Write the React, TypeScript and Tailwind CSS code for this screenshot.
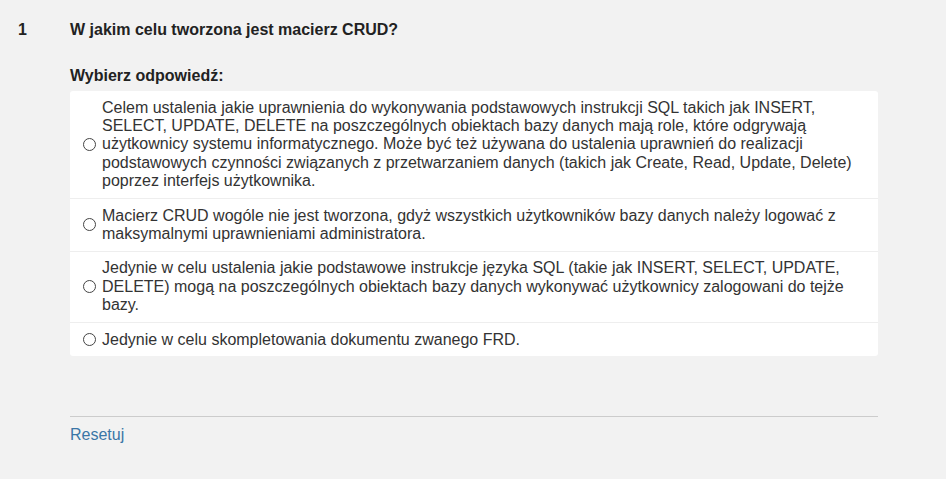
const options = [
  "Celem ustalenia jakie uprawnienia do wykonywania podstawowych instrukcji SQL takich jak INSERT, SELECT, UPDATE, DELETE na poszczególnych obiektach bazy danych mają role, które odgrywają użytkownicy systemu informatycznego. Może być też używana do ustalenia uprawnień do realizacji podstawowych czynności związanych z przetwarzaniem danych (takich jak Create, Read, Update, Delete) poprzez interfejs użytkownika.",
  "Macierz CRUD wogóle nie jest tworzona, gdyż wszystkich użytkowników bazy danych należy logować z maksymalnymi uprawnieniami administratora.",
  "Jedynie w celu ustalenia jakie podstawowe instrukcje języka SQL (takie jak INSERT, SELECT, UPDATE, DELETE) mogą na poszczególnych obiektach bazy danych wykonywać użytkownicy zalogowani do tejże bazy.",
  "Jedynie w celu skompletowania dokumentu zwanego FRD.",
];

export default function App() {
  return (
    <div
      className="min-h-screen w-full bg-[#f2f2f2] text-[16px] text-[#333]"
      style={{ fontFamily: "'Liberation Sans', Arial, sans-serif" }}
    >
      <div className="flex pt-[18px]">
        <div className="w-[70px] shrink-0 pl-[18px] font-bold text-[#222]">1</div>
        <div className="w-[808px]">
          <h2 className="font-bold text-[#222]">W jakim celu tworzona jest macierz CRUD?</h2>
          <div className="mt-[22px] font-bold text-[#222]">Wybierz odpowiedź:</div>
          <div className="mt-[3px] rounded-[3px] bg-white">
            {options.map((text, i) => (
              <label
                key={i}
                className={`flex items-center py-[7.5px] pl-[13px] pr-[8px] ${i > 0 ? "border-t border-[#eeeeee]" : ""}`}
              >
                <span className="mr-[6px] h-[13px] w-[13px] shrink-0 rounded-full border border-[#444] bg-white" />
                <span className="leading-[18.4px]">{text}</span>
              </label>
            ))}
          </div>
          <div className="mt-[60px] border-t border-[#cccccc]" />
          <div className="mt-[6px] text-[#3a76a6]">Resetuj</div>
        </div>
      </div>
    </div>
  );
}
